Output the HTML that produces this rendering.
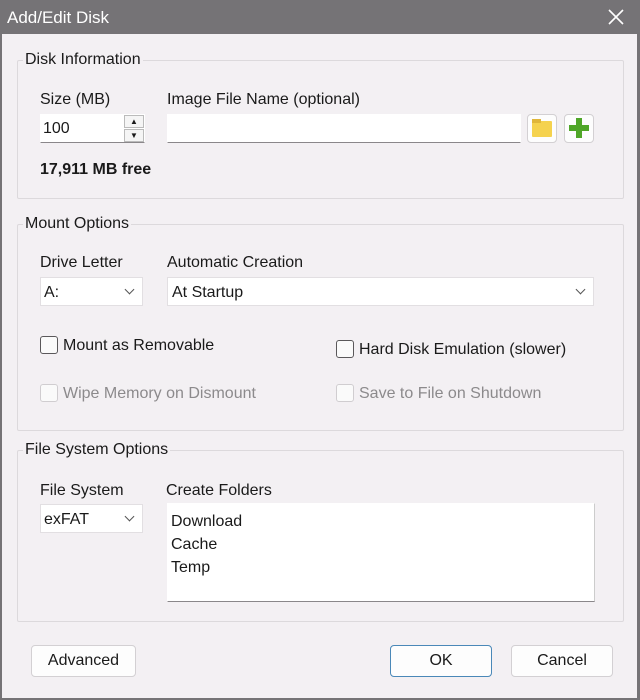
<!DOCTYPE html>
<html><head><style>
*{box-sizing:border-box;margin:0;padding:0}
body{width:640px;height:700px;background:#757376;font-family:"Liberation Sans",sans-serif;font-size:16px;color:#1a1a1a;position:relative;overflow:hidden}
.a{position:absolute}
.win{left:2px;top:34px;width:635px;height:664px;background:#f3f0f3}
.title{left:7px;top:8px;color:#fff;font-size:17px}
.grp{border:1px solid #dcd9dc;border-radius:2px}
.lbl{background:#f3f0f3;padding:0 2px}
.inp{background:#fff;border:1px solid #e8e5e8;border-bottom:1px solid #8a878a}
.cb{width:18px;height:18px;border:1px solid #5a585a;border-radius:3px;background:#fafafa}
.cbd{border-color:#d0cdd0}
.btn{background:#fdfdfd;border:1px solid #d3d0d3;border-radius:4px;text-align:center;line-height:30px}
.dis{color:#8c8a8c}
.chev{width:7px;height:7px;border-right:1.3px solid #555;border-bottom:1.3px solid #555;transform:rotate(45deg)}
</style></head><body>
<div class="a title">Add/Edit Disk</div>
<svg class="a" style="left:607px;top:8px" width="18" height="18"><path d="M2 2L16 16M16 2L2 16" stroke="#fff" stroke-width="1.6"/></svg>
<div class="a win"></div>

<div class="a grp" style="left:17px;top:60px;width:607px;height:139px"></div>
<div class="a lbl" style="left:23px;top:51px">Disk Information</div>
<div class="a" style="left:40px;top:91px">Size (MB)</div>
<div class="a" style="left:167px;top:91px">Image File Name (optional)</div>
<div class="a inp" style="left:40px;top:114px;width:105px;height:29px;border-color:#fff;border-bottom-color:#8a878a"></div>
<div class="a" style="left:43px;top:120px">100</div>
<div class="a" style="left:124px;top:115px;width:20px;height:13px;border:1px solid #bbb;background:#f5f5f5;font-size:8px;text-align:center;line-height:11px">▲</div>
<div class="a" style="left:124px;top:129px;width:20px;height:13px;border:1px solid #bbb;background:#f5f5f5;font-size:8px;text-align:center;line-height:11px">▼</div>
<div class="a inp" style="left:167px;top:114px;width:354px;height:29px;border-color:#fff;border-bottom-color:#8a878a"></div>
<div class="a btn" style="left:527px;top:114px;width:30px;height:29px"></div>
<div class="a" style="left:532px;top:121px;width:20px;height:16px;background:#f5d24e;border-radius:1px"></div>
<div class="a" style="left:532px;top:119px;width:9px;height:4px;background:#e0b63a"></div>
<div class="a btn" style="left:564px;top:114px;width:30px;height:29px"></div>
<div class="a" style="left:576px;top:118px;width:6px;height:20px;background:#4fa628"></div>
<div class="a" style="left:569px;top:125px;width:20px;height:6px;background:#4fa628"></div>
<div class="a" style="left:40px;top:161px;font-weight:bold">17,911 MB free</div>

<div class="a grp" style="left:17px;top:224px;width:607px;height:207px"></div>
<div class="a lbl" style="left:23px;top:215px">Mount Options</div>
<div class="a" style="left:40px;top:254px">Drive Letter</div>
<div class="a" style="left:167px;top:254px">Automatic Creation</div>
<div class="a inp" style="left:40px;top:277px;width:103px;height:29px;border-color:#e2dfe2"></div>
<div class="a" style="left:44px;top:284px">A:</div>
<div class="a chev" style="left:126px;top:286px"></div>
<div class="a inp" style="left:167px;top:277px;width:427px;height:29px;border-color:#e2dfe2"></div>
<div class="a" style="left:172px;top:284px">At Startup</div>
<div class="a chev" style="left:577px;top:286px"></div>
<div class="a cb" style="left:40px;top:336px"></div>
<div class="a" style="left:63px;top:337px">Mount as Removable</div>
<div class="a cb" style="left:336px;top:340px"></div>
<div class="a" style="left:359px;top:341px">Hard Disk Emulation (slower)</div>
<div class="a cb cbd" style="left:40px;top:384px"></div>
<div class="a dis" style="left:63px;top:385px">Wipe Memory on Dismount</div>
<div class="a cb cbd" style="left:336px;top:384px"></div>
<div class="a dis" style="left:359px;top:385px">Save to File on Shutdown</div>

<div class="a grp" style="left:17px;top:450px;width:607px;height:172px"></div>
<div class="a lbl" style="left:23px;top:441px">File System Options</div>
<div class="a" style="left:40px;top:482px">File System</div>
<div class="a" style="left:166px;top:482px">Create Folders</div>
<div class="a inp" style="left:40px;top:504px;width:103px;height:29px;border-color:#e2dfe2"></div>
<div class="a" style="left:44px;top:511px">exFAT</div>
<div class="a chev" style="left:126px;top:513px"></div>
<div class="a inp" style="left:167px;top:503px;width:428px;height:99px;border-color:#fff;border-bottom-color:#8a878a;border-right-color:#ccc"></div>
<div class="a" style="left:171px;top:510px;line-height:23px">Download<br>Cache<br>Temp</div>

<div class="a btn" style="left:31px;top:645px;width:105px;height:32px">Advanced</div>
<div class="a btn" style="left:390px;top:645px;width:102px;height:32px;border-color:#4a88b8">OK</div>
<div class="a btn" style="left:511px;top:645px;width:102px;height:32px">Cancel</div>
</body></html>
